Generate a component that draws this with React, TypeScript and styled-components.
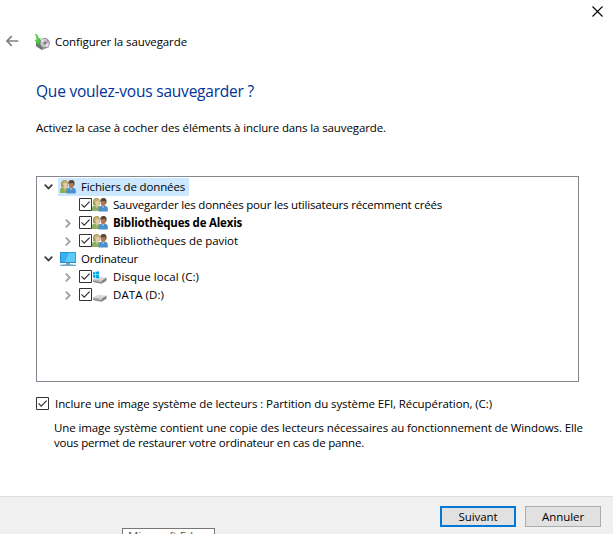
import React from 'react';
import styled, { createGlobalStyle } from 'styled-components';

const GlobalStyle = createGlobalStyle`
  * { box-sizing: border-box; }
  body { margin: 0; background: #fff; }
  svg { display: block; flex: none; }
`;

const Window = styled.main`
  width: 613px;
  height: 534px;
  overflow: hidden;
  display: flex;
  flex-direction: column;
  background: #fff;
  color: #000;
  font: 11.5px/16px "Open Sans", "Noto Sans", sans-serif;
`;

const TitleBar = styled.div`
  height: 30px;
  display: flex;
  justify-content: flex-end;
  padding: 6px 10px 0 0;
`;

const Header = styled.header`
  height: 24px;
  display: flex;
  align-items: center;
  padding-left: 6px;
`;

const BackButton = styled.span`
  padding-bottom: 2px;
`;

const WizardIconBox = styled.span`
  margin: 0 5px 0 15px;
`;

const Text = styled.span<{ $spacing: number; $bold?: boolean }>`
  white-space: pre;
  letter-spacing: ${(p) => p.$spacing}px;
  font-weight: ${(p) => (p.$bold ? 700 : 400)};
`;

const Content = styled.section`
  flex: 1;
  display: flex;
  flex-direction: column;
  padding: 25px 34px 0 36px;
`;

const Heading = styled.h1`
  margin: 0;
  color: #003399;
  font-size: 15.5px;
  line-height: 24px;
  font-weight: 400;
  letter-spacing: -0.217px;
  white-space: pre;
`;

const Instruction = styled.div`
  margin-top: 17px;
  height: 16px;
`;

const Tree = styled.div`
  width: 543px;
  height: 206px;
  margin-top: 40px;
  padding-top: 1px;
  border: 1px solid #828790;
`;

const TreeRow = styled.div<{ $child?: boolean }>`
  height: 18px;
  display: flex;
  align-items: center;
  padding-left: ${(p) => (p.$child ? 24 : 5)}px;
`;

const Toggle = styled.span`
  width: 13px;
  height: 13px;
  display: flex;
  align-items: center;
  justify-content: center;
`;

const RootLabel = styled.span<{ $selected?: boolean }>`
  height: 18px;
  display: flex;
  align-items: center;
  gap: 5px;
  margin-left: 3px;
  padding: 0 4px 0 2px;
  background: ${(p) => (p.$selected ? '#cce8ff' : 'transparent')};
`;

const CheckCell = styled.span`
  margin-left: 5px;
  padding-bottom: 1px;
`;

const ItemIcon = styled.span`
  margin-right: 5px;
`;

const OptionRow = styled.label`
  height: 16px;
  display: flex;
  align-items: center;
  gap: 6px;
  margin-top: 14px;
`;

const OptionCheck = styled.span`
  padding-bottom: 1px;
`;

const Description = styled.div`
  display: flex;
  flex-direction: column;
  margin: 8px 0 0 18px;
  line-height: 15px;
`;

const Footer = styled.footer`
  position: relative;
  height: 38px;
  display: flex;
  justify-content: flex-end;
  gap: 9px;
  padding: 9px 12px 0 0;
  background: #f0f0f0;
  border-top: 1px solid #dfdfdf;
`;

const Button = styled.button<{ $primary?: boolean }>`
  width: 76px;
  height: 21px;
  padding: 0;
  display: flex;
  align-items: center;
  justify-content: center;
  color: #000;
  background: #e1e1e1;
  border: ${(p) => (p.$primary ? '2px solid #0078d7' : '1px solid #adadad')};
  border-radius: 0;
  font: inherit;
`;

const Tooltip = styled.div`
  position: absolute;
  left: 122px;
  top: 31px;
  width: 93px;
  height: 20px;
  padding-left: 5px;
  color: #575757;
  background: #fff;
  border: 1px solid #767676;
  line-height: 13px;
`;

const CloseIcon = () => (
  <svg width="11" height="11" viewBox="0 0 11 11">
    <path d="M.5.5l10 10M10.5.5l-10 10" stroke="#000" strokeWidth="1.1" />
  </svg>
);

const BackIcon = () => (
  <svg width="13" height="12" viewBox="0 0 13 12">
    <path d="M12.3 6H1M5.7 1.2L1 6l4.7 4.8" fill="none" stroke="#808080" strokeWidth="1.7" />
  </svg>
);

const BackupIcon = () => (
  <svg width="16" height="16" viewBox="0 0 16 16">
    <path d="M2 8l7-3 6 3v5l-7 3-6-4z" fill="#8c9090" />
    <path d="M2 8l6 3v5l-6-4z" fill="#6f7670" />
    <circle cx="10.8" cy="9" r="4.7" fill="#cac7cc" stroke="#88858b" strokeWidth=".8" />
    <path d="M10.8 9l-4-2 2-2.3zM10.8 9l4.2 2-2 2.3z" fill="#ece7ed" />
    <path d="M10.8 9l3-3.5 1.3 2.2z" fill="#ad95ad" />
    <circle cx="10.8" cy="9" r="1.5" fill="#635f65" />
    <circle cx="10.8" cy="9" r=".6" fill="#fff" />
    <path d="M1 0c2 .2 3.2 1.7 3.5 5L6.4 4 4.7 11 1 6.2l1.7-.3C2.8 3.3 2.3 1.4 1 0z" fill="#45dc32" stroke="#2aa52c" strokeWidth=".4" />
  </svg>
);

const Check = () => (
  <svg width="13" height="13" viewBox="0 0 13 13">
    <path d="M.5.5h12v12H.5z" fill="#fff" stroke="#333" />
    <path d="M2.5 6.4l2.7 2.7 5.4-5.4" fill="none" stroke="#333" strokeWidth="1.2" />
  </svg>
);

const Chevron = ({ open }: { open?: boolean }) =>
  open ? (
    <svg width="9" height="6" viewBox="0 0 9 6">
      <path d="M.7.7l3.8 3.8L8.3.7" fill="none" stroke="#404040" strokeWidth="1.8" />
    </svg>
  ) : (
    <svg width="6" height="9" viewBox="0 0 6 9">
      <path d="M.8.6l3.9 3.9L.8 8.4" fill="none" stroke="#a2a2a2" strokeWidth="1.8" />
    </svg>
  );

const UsersIcon = () => (
  <svg width="16" height="16" viewBox="0 0 16 16">
    <path d="M0 14V11c0-1.6 1-2.5 3-2.8h3l2.5 2V14z" fill="#8eae62" />
    <path d="M3.2 8h3L5 12z" fill="#d9c59a" />
    <path d="M1 8V5c0-2.5 1.4-4 3.8-4 2 0 3 1 3 3v4z" fill="#aa9a5c" />
    <ellipse cx="5.3" cy="5.4" rx="2" ry="2.9" fill="#e6cda1" />
    <path d="M2.2 5c.1-2 1.2-3.2 3.4-3L7.5 4C5 4 4 4.5 2.2 5z" fill="#c9b36e" />
    <path d="M6.6 14.5v-3c0-1.6 1-2.5 2.7-2.8h3.5c2 .3 3 1.3 3 2.8v3z" fill="#4b91cc" />
    <path d="M9.8 9h2.6L11 11.5z" fill="#a5c9e6" />
    <ellipse cx="11.2" cy="5.6" rx="2.5" ry="3.6" fill="#b07a54" />
    <path d="M8.4 5C8 2.5 9.2 1 11.4 1c2.5 0 3.7 1.5 3 5l-.8 1.3L13 4.1C11 4.4 9.8 3.8 8.4 5z" fill="#5b4739" />
  </svg>
);

const ComputerIcon = () => (
  <svg width="16" height="16" viewBox="0 0 16 16">
    <path d="M0 1h16v11H0z" fill="#2789c5" />
    <path d="M.8 1.8h14.4v9.3H.8z" fill="#36b0ef" />
    <path d="M9 1.8h6.2v9.3H5z" fill="#5fc9f8" />
    <path d="M6 12h4v1.5h3V15H3v-1.5h3z" fill="#80a5b8" />
    <path d="M0 13.7h16V15H0z" fill="#71a8c6" />
  </svg>
);

const DriveIcon = ({ windows }: { windows?: boolean }) => (
  <svg width="16" height="16" viewBox="0 0 16 16">
    <path d="M1 10.3l5-2.3 8.5.5-5 3.2z" fill="#d8d8d8" />
    <path d="M1 10.3l8.5 1.4v2.6L1 12.5z" fill="#b0b0b0" />
    <path d="M9.5 11.7l5-3.2v2.6l-5 3.2z" fill="#858585" />
    <path d="M1.3 12.6l8.2 1.7 5-3.1" fill="none" stroke="#555" strokeWidth=".7" />
    <path d="M7.6 12.6l1 .2" stroke="#8ee082" />
    {windows && <path d="M1 3.2l2.5-.4v2.8H1zM4 2.7l3-.4v3.3H4zM1 6.1h2.5v2.8L1 8.5zM4 6.1h3v3.3L4 9z" fill="#00a9e9" />}
  </svg>
);

type Kind = 'users' | 'windows' | 'drive';
interface ItemProps { label: string; spacing: number; kind: Kind; expandable?: boolean; bold?: boolean }

const TreeItem = ({ label, spacing, kind, expandable, bold }: ItemProps) => (
  <TreeRow $child>
    <Toggle>{expandable && <Chevron />}</Toggle>
    <CheckCell><Check /></CheckCell>
    <ItemIcon>{kind === 'users' ? <UsersIcon /> : <DriveIcon windows={kind === 'windows'} />}</ItemIcon>
    <Text $spacing={spacing} $bold={bold}>{label}</Text>
  </TreeRow>
);

export default function App() {
  return (
    <>
      <GlobalStyle />
      <Window>
        <TitleBar><CloseIcon /></TitleBar>
        <Header>
          <BackButton><BackIcon /></BackButton>
          <WizardIconBox><BackupIcon /></WizardIconBox>
          <Text $spacing={-0.098}>Configurer la sauvegarde</Text>
        </Header>
        <Content>
          <Heading>Que voulez-vous sauvegarder ?</Heading>
          <Instruction>
            <Text $spacing={-0.115}>Activez la case à cocher des éléments à inclure dans la sauvegarde.</Text>
          </Instruction>
          <Tree>
            <TreeRow>
              <Toggle><Chevron open /></Toggle>
              <RootLabel $selected><UsersIcon /><Text $spacing={-0.15}>Fichiers de données</Text></RootLabel>
            </TreeRow>
            <TreeItem kind="users" spacing={-0.187} label="Sauvegarder les données pour les utilisateurs récemment créés" />
            <TreeItem kind="users" spacing={-0.196} label="Bibliothèques de Alexis" expandable bold />
            <TreeItem kind="users" spacing={-0.057} label="Bibliothèques de paviot" expandable />
            <TreeRow>
              <Toggle><Chevron open /></Toggle>
              <RootLabel><ComputerIcon /><Text $spacing={-0.23}>Ordinateur</Text></RootLabel>
            </TreeRow>
            <TreeItem kind="windows" spacing={0.065} label="Disque local (C:)" expandable />
            <TreeItem kind="drive" spacing={0.08} label="DATA (D:)" expandable />
          </Tree>
          <OptionRow>
            <OptionCheck><Check /></OptionCheck>
            <Text $spacing={-0.086}>Inclure une image système de lecteurs : Partition du système EFI, Récupération, (C:)</Text>
          </OptionRow>
          <Description>
            <Text $spacing={-0.103}>Une image système contient une copie des lecteurs nécessaires au fonctionnement de Windows. Elle</Text>
            <Text $spacing={-0.2}>vous permet de restaurer votre ordinateur en cas de panne.</Text>
          </Description>
        </Content>
        <Footer>
          <Button $primary><Text $spacing={-0.08}>Suivant</Text></Button>
          <Button><Text $spacing={-0.06}>Annuler</Text></Button>
          <Tooltip><Text $spacing={-0.2}>Microsoft Edge</Text></Tooltip>
        </Footer>
      </Window>
    </>
  );
}
